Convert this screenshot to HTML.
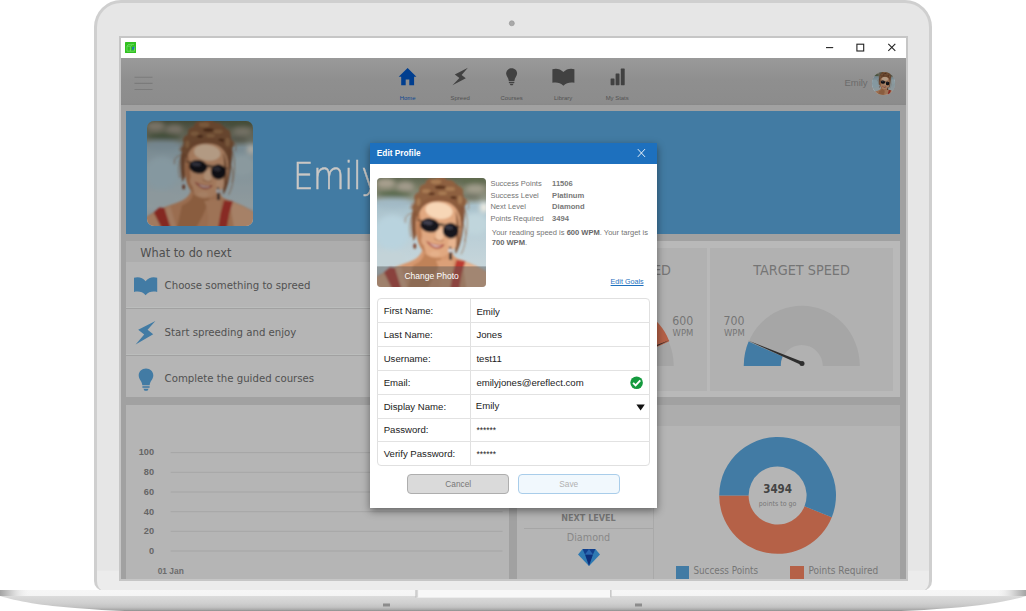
<!DOCTYPE html>
<html lang="en"><head><meta charset="utf-8"><title>Edit Profile</title>
<style>
*{box-sizing:border-box;margin:0;padding:0}
html,body{width:1026px;height:611px;background:#fff;overflow:hidden}
body{position:relative;font-family:"Liberation Sans",Arial,sans-serif;color:#555}
.a{position:absolute}
.os{font-family:"DejaVu Sans Condensed","DejaVu Sans","Liberation Sans",sans-serif}
.t{position:absolute;white-space:nowrap;line-height:1}
#body{left:94px;top:0;width:838px;height:590.5px;background:linear-gradient(#e6e6e6 0,#e6e6e6 567px,#ececec 568.5px);border:solid #cfcfcf;border-width:3px 3.6px 0 3.6px;border-radius:27px 27px 10px 10px}
#scr{left:119px;top:36px;width:789px;height:545px;background:#a1a1a1;border:2px solid #c6c6c6;overflow:hidden}
#tb{left:0;top:0;width:100%;height:20px;background:#fff}
#nav{left:0;top:20px;width:100%;height:47px;background:linear-gradient(#9a9a9a,#8f8f8f 45%,#8c8c8c 96%,#888)}
.pan{background:#b5b5b5}
.row{left:43.6px;font-size:11.3px;color:#515151}
.il{left:120.4px;font-size:7.5px;color:#747474}
.iv{left:182.1px;font-size:7.6px;font-weight:bold;color:#777}
.hl{left:7px;width:273px;height:1px;background:#e2e2e2}
.fl{left:13.7px;font-size:9.6px;color:#222}
.fv{left:106.4px;font-size:9.6px;color:#222}
.btn{top:330.6px;width:102.4px;height:20.4px;border:1px solid;border-radius:4px;font-size:8.3px;line-height:18.4px;text-align:center}
.nl{top:57.5px;width:0;font-size:5.95px;color:#525252;display:flex;justify-content:center}
</style></head><body>

<svg width="0" height="0" style="position:absolute">
  <defs>
    <filter id="bl" x="-5%" y="-5%" width="110%" height="110%"><feGaussianBlur stdDeviation="0.9"/></filter>
    <filter id="bl2" x="-10%" y="-10%" width="120%" height="120%"><feGaussianBlur stdDeviation="2.4"/></filter>
    <linearGradient id="pbg" x1="0" y1="0" x2="0" y2="1">
      <stop offset="0" stop-color="#5e6650"/><stop offset=".1" stop-color="#7d806a"/><stop offset=".19" stop-color="#8f9586"/>
      <stop offset=".25" stop-color="#a8c0ca"/><stop offset=".45" stop-color="#b7cdd6"/><stop offset=".8" stop-color="#c6d5da"/><stop offset="1" stop-color="#b4c3cb"/>
    </linearGradient>
    <symbol id="photo" viewBox="0 0 100 100" preserveAspectRatio="none">
      <rect width="100" height="100" fill="url(#pbg)"/>
      <g filter="url(#bl2)">
        <ellipse cx="8" cy="5" rx="9" ry="4.500" fill="#a9a08f"/>
        <ellipse cx="26" cy="8" rx="8" ry="4.500" fill="#a39b8c"/>
        <ellipse cx="16" cy="14.500" rx="16" ry="3" fill="#566849"/>
        <ellipse cx="88" cy="2" rx="12" ry="3.500" fill="#5f6b4e"/>
        <ellipse cx="90" cy="10" rx="9" ry="4" fill="#a19d8c"/>
        <ellipse cx="86" cy="17" rx="9" ry="2.500" fill="#6d6f60"/>
        <ellipse cx="98" cy="27" rx="3.500" ry="4.500" fill="#f6f1e4"/>
        <ellipse cx="14" cy="23" rx="18" ry="4" fill="#a2bac6"/>
        <ellipse cx="90" cy="42" rx="12" ry="10" fill="#c0d5dc"/>
        <ellipse cx="14" cy="50" rx="16" ry="16" fill="#b9d3de"/>
        <ellipse cx="12" cy="74" rx="14" ry="8" fill="#c3d3d8"/>
      </g>
      <g filter="url(#bl)">
        <!-- shoulders / chest -->
        <path d="M-2 102V92C6 86 16 82 24 79C32 76 40 74 42 64L69 66C69 72 72 73.500 77 75C88 79 96 83 102 87V102Z" fill="#d6986f"/>
        <path d="M33 80C41 77 44 72 44 64L60 68C58 80 52 92 46 102H28Z" fill="#c08259"/>
        <path d="M78 76C88 80 96 83 102 88V102H82Z" fill="#e6b38f"/>
        <path d="M-2 93C6 87 14 84 22 81L28 102H-2Z" fill="#e0a984"/>
        <path d="M54 76C58 84 59 92 57 102H67C69 90 70 82 69 74Z" fill="#dba078"/>
        <!-- straps -->
        <path d="M6.300 86.800L11.600 82.100L16.500 82.600L22.600 102H14Z" fill="#b8392f"/>
        <path d="M72.700 75.200L81 76.400L77.700 87.600L75.200 102H67L69.400 87.600Z" fill="#bd3b31"/>
        <!-- hair mass -->
        <path d="M33.500 58C31 46 31 34 34 24C36 14 42 5 52 1.500C62 -1.500 74 3 78.500 13C81.500 22 80.500 34 79 44C78 54 76 63 72 70L71 56L72 32L60 21L44 23L38.500 34L37 50Z" fill="#86573a"/>
        <g fill="#8e6040">
          <circle cx="50" cy="6" r="6"/><circle cx="58" cy="4.500" r="6.500"/><circle cx="66" cy="7.500" r="6"/><circle cx="44" cy="11" r="5.500"/><circle cx="56" cy="11" r="7"/>
          <circle cx="39" cy="18" r="5"/><circle cx="73" cy="13" r="6"/><circle cx="77.500" cy="22" r="4.500"/><circle cx="36" cy="27" r="4"/><circle cx="66" cy="16" r="5"/><circle cx="47" cy="17" r="5"/>
        </g>
        <g fill="#a87a52"><ellipse cx="54" cy="3.500" rx="5" ry="2.200"/><ellipse cx="45" cy="12" rx="4" ry="2"/><ellipse cx="67" cy="10" rx="4.500" ry="2"/><ellipse cx="76" cy="20" rx="2" ry="4"/><ellipse cx="60" cy="14" rx="4" ry="1.800"/><ellipse cx="38" cy="22" rx="2" ry="3.500"/></g>
        <g fill="#5a331d"><ellipse cx="58" cy="8.500" rx="5" ry="1.600"/><ellipse cx="50" cy="14.500" rx="3" ry="1.300"/><ellipse cx="70" cy="18" rx="3" ry="1.500"/></g>
        <!-- wisps -->
        <g fill="none" stroke="#94623e" stroke-width=".8" opacity=".75">
          <path d="M35 28C30 36 29 46 31 54"/><path d="M33 32C27 33 25 37 26 41"/><path d="M80 28C84 36 83 50 80 58"/><path d="M79 42C83 52 81 62 77 70"/><path d="M37 20C32 22 30 26 31 29"/><path d="M79 18C84 20 85 25 83 29"/>
        </g>
        <!-- face -->
        <path d="M40 25C44 20.500 50 18.500 56 19C64 19.500 72 23 75 31C77 38 77.500 48 75 57C73 63 68 68 62 71.500C57 74 50 74 45 70C40 66 37 59 36 51C35 42 36 31 40 25Z" fill="#e1a880"/>
        <path d="M38.500 30C36 38 35.500 48 37 56C38.500 62 41 66 45 70C42 60 40 50 40.500 40Z" fill="#bf8058"/>
        <ellipse cx="57" cy="30" rx="12.500" ry="7.500" fill="#f7d6b6" transform="rotate(8 57 29)"/>
        <ellipse cx="57.500" cy="52" rx="3.600" ry="6" fill="#efc29f" transform="rotate(8 57 52)"/>
        <ellipse cx="69" cy="60" rx="4" ry="5" fill="#e8b590"/>
        <ellipse cx="44" cy="57" rx="3.500" ry="5" fill="#dfa882"/>
        <ellipse cx="53" cy="69.500" rx="5" ry="2.500" fill="#e5b08a"/>
        <!-- hairline over forehead -->
        <path d="M36.500 40C36 30 39 22 46 18.500C54 15 66 16 72 21C76 25 77.500 32 77 40C75.500 32 72 25 65 22.500C58 20.500 50 21 45 24C40 27 38 33 36.500 40Z" fill="#8c5c3c"/>
        <path d="M72 30C75 36 76 46 75 56C74 62 73 66 71.500 69C73 60 73.500 48 72 30Z" fill="#8c5c3c"/>
        <!-- glasses -->
        <path d="M37 38.500L76 45" stroke="#3a2d22" stroke-width="1"/>
        <ellipse cx="48.300" cy="43.400" rx="8.800" ry="6.400" fill="#16171e" transform="rotate(8 48.3 43.4)"/>
        <ellipse cx="67.400" cy="48.300" rx="7.200" ry="7.200" fill="#16171e" transform="rotate(8 67.4 48.3)"/>
        <path d="M56.500 43.500C58 42.500 59.500 42.800 60.800 44.500" stroke="#2a2420" stroke-width="1" fill="none"/>
        <ellipse cx="46.500" cy="41" rx="4.500" ry="1.900" fill="#40414f" transform="rotate(8 46.5 41)"/>
        <ellipse cx="66" cy="45.500" rx="3.600" ry="2" fill="#383945" transform="rotate(8 66 45.5)"/>
        <!-- nose shadow -->
        <path d="M52.500 55.500C55 57.500 58.500 58 61 57" stroke="#b67855" stroke-width="1" fill="none"/>
        <!-- mouth -->
        <path d="M45 57.500C50 60.500 56 62 61.800 60.800C60.500 66 50 67 45 57.500Z" fill="#a6453a"/>
        <path d="M47.500 59.300C51.500 61.500 56 62.500 60 61.800C57.500 64 51 63.500 47.500 59.300Z" fill="#f8eee6"/>
        <!-- earrings -->
        <ellipse cx="34.600" cy="62.500" rx="1.300" ry="2.600" fill="#7a3b22"/>
        <path d="M66.300 63L67.900 63L68.800 75L66 75Z" fill="#2b282a"/>
        <circle cx="67" cy="66.500" r="1.900" fill="#d5d8dc"/>
      </g>
    </symbol>
  </defs>
</svg>
<div class="a" id="body"></div>
<svg class="a" style="left:505px;top:17px" width="14" height="14" viewBox="505 17 14 14"><circle cx="511.8" cy="23.3" r="2.5" fill="#a9a9a9" stroke="#989898" stroke-width=".7"/></svg>
<!-- laptop base -->
<svg class="a" style="left:0;top:586px" width="1026" height="25" viewBox="0 586 1026 25">
  <defs>
    <linearGradient id="bg1" x1="0" y1="590" x2="0" y2="611" gradientUnits="userSpaceOnUse">
      <stop offset="0" stop-color="#f6f6f6"/><stop offset=".27" stop-color="#f4f4f4"/>
      <stop offset=".31" stop-color="#dadada"/><stop offset=".62" stop-color="#d0d0d0"/>
      <stop offset=".82" stop-color="#c2c2c2"/><stop offset=".93" stop-color="#aaa"/><stop offset="1" stop-color="#8e8e8e"/>
    </linearGradient>
    <linearGradient id="bgl" x1="0" y1="0" x2="1" y2="0">
      <stop offset="0" stop-color="#a4a4a4"/><stop offset=".4" stop-color="#d2d2d2"/><stop offset="1" stop-color="#f4f4f4" stop-opacity="0"/>
    </linearGradient>
    <linearGradient id="bgr" x1="1" y1="0" x2="0" y2="0">
      <stop offset="0" stop-color="#a4a4a4"/><stop offset=".4" stop-color="#d2d2d2"/><stop offset="1" stop-color="#f4f4f4" stop-opacity="0"/>
    </linearGradient>
  </defs>
  <path d="M0,590 H1026 V596 C1011,601 981,606 951,608 C931,609.5 916,610.5 901,611 V612 H125 V611 C110,610.5 95,609.5 75,608 C45,606 15,601 0,596 Z" fill="url(#bg1)"/>
  <rect x="0" y="590" width="30" height="6" fill="url(#bgl)"/>
  <rect x="996" y="590" width="30" height="6" fill="url(#bgr)"/>
  <rect x="416" y="590" width="195" height="7.6" fill="#f8f8f8"/>
  <rect x="415.5" y="590" width="1.2" height="7.6" fill="#b6b6b6"/><rect x="416.7" y="590" width="1.4" height="7.6" fill="#d9d9d9"/>
  <rect x="610" y="590" width="1.6" height="7.6" fill="#c9c9c9"/>
  <rect x="383" y="603.5" width="7" height="3" fill="#8c8c8c"/>
  <rect x="635" y="603.5" width="7" height="3" fill="#8c8c8c"/>
</svg>

<!-- screen: inner origin = (121,38) -->
<div class="a" id="scr">
  <div class="a" id="tb"></div>
  <div class="a" id="nav"></div>

  <!-- title bar contents (coords relative to screen origin 121,38) -->
  <svg class="a" style="left:4px;top:4px" width="11.2" height="11" viewBox="0 0 11.2 11">
    <rect width="11.2" height="11" rx=".6" fill="#31c120"/>
    <path d="M2 9V4.2L3.2 2.6H5.6L6.8 4.2M2 4.2H5.4V9.2M1.8 9.2H9.4V4.4M6 2.4H9" fill="none" stroke="#7fe273" stroke-width=".7"/>
    <path d="M6.7 5.6L9.6 4.6Q9.4 7.4 7.6 8.2L6.9 7.9L7.6 6.8Z" fill="#1a6ec2"/>
  </svg>
  <svg class="a" style="left:700px;top:0" width="86" height="20" viewBox="0 0 86 20">
    <path d="M5 9.6H12.2" stroke="#222" stroke-width="1.1" fill="none"/>
    <rect x="35.9" y="6.2" width="6.8" height="6.8" fill="none" stroke="#222" stroke-width="1.1"/>
    <path d="M67.3 5.9L74.3 12.9M74.3 5.9L67.3 12.9" stroke="#222" stroke-width="1.1" fill="none"/>
  </svg>

  <!-- nav -->
  <svg class="a" style="left:0;top:20px" width="786" height="47" viewBox="121 58 786 47">
    <g stroke="#7b7b7b" stroke-width="1.1"><path d="M134.5 77.2H152.5M134.5 83.4H152.5M134.5 89.5H152.5"/></g>
    <!-- home -->
    <path d="M407.6 68.1L416.4 76.8H414.1V85.2H409.3V79.5H405.7V85.2H401.2V76.8H398.7Z" fill="#003e8f"/>
    <!-- bolt -->
    <path d="M467.9 67.8L454.8 74.6L459.4 78L452.5 85.2L465.8 78.2L461.6 75Z" fill="#414141"/>
    <!-- bulb -->
    <path d="M511.6 68.3C514.9 68.3 517.1 70.7 517.1 73.6C517.1 76.3 514.6 78 514.4 81H508.8C508.6 78 506.1 76.3 506.1 73.6C506.1 70.7 508.3 68.3 511.6 68.3Z" fill="#414141"/>
    <rect x="508.9" y="81.8" width="5.4" height="1.3" fill="#414141"/><path d="M509.6 83.8H513.6L512.6 85.3H510.6Z" fill="#414141"/>
    <!-- library -->
    <path d="M552.4 69.2C556 67.9 560.6 68.8 563.4 72C566.2 68.8 570.8 67.9 574.4 69.2V82.8C570.8 82 566.4 82.4 563.4 85.8C560.4 82.4 556 82 552.4 82.8Z" fill="#414141"/>
    <!-- stats -->
    <rect x="610.6" y="78.4" width="3.9" height="6.8" rx=".6" fill="#414141"/>
    <rect x="615.6" y="73.4" width="3.9" height="11.8" rx=".6" fill="#414141"/>
    <rect x="620.8" y="68.6" width="3.9" height="16.6" rx=".6" fill="#414141"/>
  </svg>
  <div class="t nl" style="left:286.6px;color:#0d4791">Home</div>
  <div class="t nl" style="left:339.2px">Spreed</div>
  <div class="t nl" style="left:390.6px">Courses</div>
  <div class="t nl" style="left:442.1px">Library</div>
  <div class="t nl" style="left:496.2px">My Stats</div>
  <div class="t" style="left:723.4px;top:39.9px;font-size:9.5px;color:#6b6b6b">Emily</div>
  <!-- banner -->
  <div class="a" id="ban" style="left:5.3px;top:73px;width:774.2px;height:122.7px;background:#427ba3"></div>
  <svg class="a" style="left:26px;top:82.5px;border-radius:7px" width="106" height="105.4"><use href="#photo" width="106" height="105.4"/><rect width="106" height="105.4" fill="#000" opacity=".28"/></svg>
  <div class="t" id="bigname" style="left:171.8px;top:119.7px;font-family:'DejaVu Sans Light','DejaVu Sans',sans-serif;font-weight:200;font-size:37px;letter-spacing:-.6px;transform:scaleX(.88);transform-origin:0 0;-webkit-text-stroke:.5px #cbc8c5;color:#cbc8c5">Emily</div>
  <svg class="a" style="left:751px;top:34px;border-radius:50%" width="22.6" height="22.6"><use href="#photo" x="-1" y="-.5" width="24.6" height="24.6"/><rect width="23" height="23" fill="#000" opacity=".28"/></svg>
  <!-- what to do next -->
  <div class="a" style="left:5.3px;top:203px;width:384px;height:21px;background:#adadad"></div>
  <div class="a pan" style="left:5.3px;top:224px;width:384px;height:46px;border-bottom:1px solid #bbbdbc"></div>
  <div class="a pan" style="left:5.3px;top:271px;width:384px;height:46px;border-bottom:1px solid #bbbdbc"></div>
  <div class="a pan" style="left:5.3px;top:318px;width:384px;height:41px"></div>
  <!-- chart panel -->
  <div class="a pan" style="left:5.3px;top:366.6px;width:383.2px;height:180px"></div>
  <!-- speed panel -->
  <div class="a" style="left:396px;top:203.3px;width:383.4px;height:155.5px;background:#b9b9b9"></div>
  <div class="a" style="left:403px;top:210px;width:183.3px;height:143px;background:#b1b1b1"></div>
  <div class="a" style="left:589.1px;top:210px;width:183.3px;height:143px;background:#b1b1b1"></div>
  <!-- points panel -->
  <div class="a" style="left:396px;top:366.6px;width:383.4px;height:180px;background:#b5b5b5"></div>
  <div class="a" style="left:396px;top:366.6px;width:383.4px;height:21.4px;background:#adadad"></div>

  <!-- what to do next content -->
  <div class="t os" style="left:19.3px;top:209px;font-size:12.6px;color:#4f4f4f" id="wtd">What to do next</div>
  <div class="t os row" style="top:242px" id="r1">Choose something to spreed</div>
  <div class="t os row" style="top:288.5px">Start spreeding and enjoy</div>
  <div class="t os row" style="top:335.4px">Complete the guided courses</div>
  <svg class="a" style="left:0;top:224px" width="50" height="140" viewBox="121 262 50 140">
    <path d="M134 277.8C138 276.4 142.8 277.4 145.6 281.2C148.4 277.4 153.2 276.4 157.2 277.8V292C153.2 291 148.6 291.4 145.6 295.3C142.6 291.4 138 291 134 292Z" fill="#427ba4"/>
    <path d="M155.4 320.9L138.2 329.8L144.2 334.4L135.6 344.6L153.2 334.2L147.6 329.8Z" fill="#427ba4"/>
    <path d="M146 368.6C150.2 368.6 153.3 371.7 153.3 375.5C153.3 379.2 150 381.2 149.7 385.2H142.3C142 381.2 138.7 379.2 138.7 375.5C138.7 371.7 141.8 368.6 146 368.6Z" fill="#427ba4"/>
    <rect x="142.4" y="386.2" width="7.2" height="1.6" fill="#427ba4"/><path d="M143.4 388.7H148.6L147.4 390.8H144.6Z" fill="#427ba4"/>
  </svg>
  <!-- chart -->
  <svg class="a" style="left:5.3px;top:366.6px" width="384" height="176" viewBox="126.3 404.6 384 176" font-family="Liberation Sans, Arial, sans-serif" font-weight="bold" font-size="9.2" fill="#666">
    <g stroke="#a2a2a2" stroke-width=".8"><path d="M171 452.2H502.8M171 471.9H502.8M171 491.6H502.8M171 511.3H502.8M171 530.9H502.8M171 550.6H502.8"/></g>
    <g text-anchor="end"><text x="154.4" y="455">100</text><text x="154.4" y="474.8">80</text><text x="154.4" y="494.4">60</text><text x="154.4" y="514.2">40</text><text x="154.4" y="533.8">20</text><text x="154.4" y="553.5">0</text></g>
    <text x="158" y="574" font-size="8.4" fill="#6c6c6c">01 Jan</text>
  </svg>
  <!-- speed panel content -->
  <div class="t os" style="left:496px;top:224.6px;font-size:14.3px;color:#757575;width:0;display:flex;justify-content:center" id="cs">CURRENT SPEED</div>
  <div class="t os" style="left:680.6px;top:224.6px;font-size:14.3px;color:#757575;width:0;display:flex;justify-content:center" id="ts">TARGET SPEED</div>
  <svg class="a" style="left:396px;top:260px" width="384" height="80" viewBox="517 298 384 80">
    <!-- left gauge -->
    <path d="M557.7 366A58 60.3 0 0 1 673.7 366H636.7A21 21 0 0 0 594.7 366Z" fill="#a6a6a6"/>
    <path d="M557.7 366A58 60.3 0 0 1 669.3 341.2L635 357A21 21 0 0 0 594.7 366Z" fill="#b56147"/>
    <path d="M669.8 340L616.6 360.6L615.6 366Z" fill="#2a2a2a"/>
    <!-- right gauge -->
    <path d="M743.8 366A58 60.3 0 0 1 859.8 366H822.8A21 21 0 0 0 780.8 366Z" fill="#a6a6a6"/>
    <path d="M743.8 366A58 60.3 0 0 1 748.6 341.6L782.6 356.6A21 21 0 0 0 780.8 366Z" fill="#427ba4"/>
    <path d="M748 340.6L801 361.2L802.4 365.6Z" fill="#2e2e2e"/><circle cx="802" cy="363.4" r="2.5" fill="#2e2e2e"/>
  </svg>
  <div class="t os" style="left:551.2px;top:277px;font-size:12.2px;color:#757575">600</div>
  <div class="t os" style="left:551.6px;top:290px;font-size:9.4px;color:#757575">WPM</div>
  <div class="t os" style="left:602.6px;top:277px;font-size:12.2px;color:#757575">700</div>
  <div class="t os" style="left:603px;top:290px;font-size:9.4px;color:#757575">WPM</div>
  <!-- next level -->
  <div class="a" style="left:532px;top:366.6px;width:1px;height:180px;background:#a9a9a9"></div>
  <div class="t os" style="left:467.5px;top:476.1px;font-size:9px;font-weight:bold;color:#767676;width:0;display:flex;justify-content:center">NEXT LEVEL</div>
  <div class="a" style="left:403px;top:489.6px;width:129px;height:1px;background:#a6a6a6"></div>
  <div class="t os" style="left:467.5px;top:495.1px;font-size:10.7px;color:#888;width:0;display:flex;justify-content:center">Diamond</div>
  <svg class="a" style="left:457px;top:511px" width="22" height="17" viewBox="0 0 22 17">
    <path d="M4.6 0H17.4L22 5.6L11 17L0 5.6Z" fill="#2f7ab3"/>
    <path d="M4.6 0H17.4L15 5.6H7Z" fill="#123f8c"/>
    <path d="M7 5.6H15L11 17Z" fill="#0d2f7a"/>
    <path d="M7 5.6L11 0L15 5.6Z" fill="#2a66b0"/>
  </svg>
  <!-- donut -->
  <svg class="a" style="left:590px;top:395px" width="136" height="126" viewBox="711 433 136 126">
    <path d="M831.8 517.2A58.4 58.4 0 0 1 719.2 495.5L748.6 495.5A29.0 29.0 0 0 0 804.5 506.3Z" fill="#b56147"/>
    <path d="M719.2 495.5A58.4 58.4 0 1 1 831.8 517.2L804.5 506.3A29.0 29.0 0 1 0 748.6 495.5Z" fill="#427ba4"/>
  </svg>
  <div class="t os" style="left:656.6px;top:445.9px;font-size:11.5px;font-weight:bold;color:#444;width:0;display:flex;justify-content:center">3494</div>
  <div class="t os" style="left:656.6px;top:462.8px;font-size:7px;color:#777;width:0;display:flex;justify-content:center">points to go</div>
  <div class="a" style="left:554.6px;top:527.8px;width:13.4px;height:14px;background:#427ba4"></div>
  <div class="t os" style="left:572.4px;top:528.2px;font-size:9.8px;color:#767676" id="lg1">Success Points</div>
  <div class="a" style="left:669.4px;top:527.8px;width:13.6px;height:14px;background:#b56147"></div>
  <div class="t os" style="left:687.5px;top:528.2px;font-size:10px;color:#767676" id="lg2">Points Required</div>
</div>

<!-- modal (page coords) -->
<div class="a" id="modal" style="left:370px;top:143px;width:287px;height:365px;background:#fff;box-shadow:0 3px 8px rgba(0,0,0,.45)">
  <div class="a" style="left:0;top:0;width:287px;height:20.8px;background:#1d70be"></div>
  <div class="t" style="left:6.8px;top:6.1px;font-size:8.3px;font-weight:bold;color:#fff">Edit Profile</div>
  <svg class="a" style="left:266px;top:5px" width="12" height="12" viewBox="0 0 12 12"><path d="M1.8 1.1L9 8.9M9 1.1L1.8 8.9" stroke="#fff" stroke-width=".9" fill="none"/></svg>
  <svg class="a" style="left:6.8px;top:34.5px;border-radius:4px" width="109.2" height="109"><use href="#photo" width="109.2" height="109"/><rect y="88.4" width="110" height="21" fill="#505050" opacity=".45"/></svg>
  <div class="t" style="left:61.6px;top:129.4px;font-size:8.5px;color:#fff;width:0;display:flex;justify-content:center">Change Photo</div>
  <div class="t il" style="top:37.2px">Success Points</div><div class="t iv" style="top:37.2px">11506</div>
  <div class="t il" style="top:48.8px">Success Level</div><div class="t iv" style="top:48.8px">Platinum</div>
  <div class="t il" style="top:60.4px">Next Level</div><div class="t iv" style="top:60.4px">Diamond</div>
  <div class="t il" style="top:72px">Points Required</div><div class="t iv" style="top:72px">3494</div>
  <div class="a" style="left:121.8px;top:85.3px;width:162px;font-size:7.55px;line-height:10px;color:#747474">Your reading speed is <b style="color:#666">600 WPM</b>. Your target is <b style="color:#666">700 WPM</b>.</div>
  <div class="t" style="left:240.6px;top:136px;font-size:7.15px;color:#1d70be;text-decoration:underline">Edit Goals</div>
  <!-- form -->
  <div class="a" id="frm" style="left:6.6px;top:155.4px;width:273.6px;height:167.2px;border:1px solid #e0e0e0;border-radius:4px"></div>
  <div class="a" style="left:100px;top:155.4px;width:1px;height:167.2px;background:#e0e0e0"></div>
  <div class="a hl" style="top:179px"></div><div class="a hl" style="top:202.9px"></div><div class="a hl" style="top:226.9px"></div>
  <div class="a hl" style="top:250.9px"></div><div class="a hl" style="top:274.6px"></div><div class="a hl" style="top:298.2px"></div>
  <div class="t fl" style="top:162.9px">First Name:</div><div class="t fv" style="top:163.5px">Emily</div>
  <div class="t fl" style="top:186.8px">Last Name:</div><div class="t fv" style="top:187.4px">Jones</div>
  <div class="t fl" style="top:210.7px">Username:</div><div class="t fv" style="top:211.3px">test11</div>
  <div class="t fl" style="top:234.6px">Email:</div><div class="t fv" style="top:235.2px">emilyjones@ereflect.com</div>
  <div class="t fl" style="top:258.5px">Display Name:</div><div class="t fv" style="top:258.4px;left:105.8px">Emily</div>
  <div class="t fl" style="top:282.2px">Password:</div><div class="t fv" style="top:283px;font-size:8.4px">******</div>
  <div class="t fl" style="top:305.8px">Verify Password:</div><div class="t fv" style="top:306.8px;font-size:8.4px">******</div>
  <svg class="a" style="left:260px;top:233px" width="14" height="14" viewBox="0 0 14 14"><circle cx="6.6" cy="6.7" r="6.3" fill="#149a3e"/><path d="M3.1 6.8L5.6 9.3L10.3 4.3" stroke="#fff" stroke-width="1.9" fill="none"/></svg>
  <svg class="a" style="left:266px;top:261px" width="10" height="8" viewBox="0 0 10 8"><path d="M.4 .4H8.8L4.6 6.5Z" fill="#111"/></svg>
  <div class="a btn" style="left:37px;background:#dadada;border-color:#aeaeae;color:#777">Cancel</div>
  <div class="a btn" style="left:147.6px;background:#f1f8fd;border-color:#a9cdea;color:#b1b1b1">Save</div>
</div>
</body></html>
